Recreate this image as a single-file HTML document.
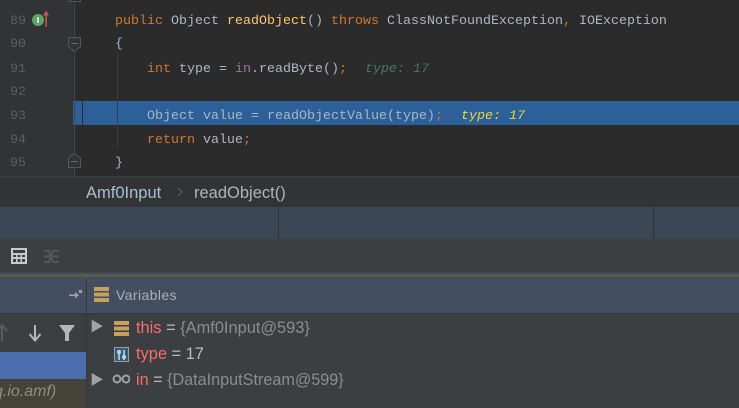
<!DOCTYPE html>
<html>
<head>
<meta charset="utf-8">
<style>
html,body{margin:0;padding:0;background:#2b2b2b;}
#r{position:relative;width:739px;height:408px;overflow:hidden;background:#2b2b2b;}
.a{position:absolute;}
.c{position:absolute;font:13.33px/18px "Liberation Mono",monospace;white-space:pre;color:#a9b7c6;}
.n{position:absolute;left:10px;width:20px;font:13.33px/18px "Liberation Mono",monospace;color:#5c5f62;white-space:pre;}
.k{color:#cc7832}.m{color:#ffc66d}.p{color:#9876aa}
.s{position:absolute;font:16.5px/20px "Liberation Sans",sans-serif;white-space:pre;color:#a9bfd4;}
.t{position:absolute;font:16.4px/20px "Liberation Sans",sans-serif;white-space:pre;color:#bbbbbb;}
.v{color:#ff6b68}.g{color:#8a8d8f}
</style>
</head>
<body>
<div id="r">
<!-- gutter -->
<div class="a" style="left:0;top:0;width:73px;height:177px;background:#313335"></div>
<div class="a" style="left:73px;top:101px;width:666px;height:24px;background:#2d5f99"></div>
<div class="a" style="left:82px;top:101px;width:1px;height:24px;background:#2b2b2b"></div>
<div class="a" style="left:117px;top:54px;width:1px;height:47px;background:#3d3d3d"></div>
<div class="a" style="left:117px;top:101px;width:1px;height:24px;background:#2b3f5c"></div>
<div class="a" style="left:117px;top:125px;width:1px;height:23px;background:#3d3d3d"></div>

<div class="n" style="top:13px">89</div>
<div class="n" style="top:36px">90</div>
<div class="n" style="top:61px">91</div>
<div class="n" style="top:84px">92</div>
<div class="n" style="top:108px">93</div>
<div class="n" style="top:132px">94</div>
<div class="n" style="top:155px">95</div>

<!-- gutter icons -->
<svg class="a" style="left:0;top:0" width="100" height="177">
<path d="M68.5 0V1.5H80.5V0" fill="none" stroke="#4f5153" />
<rect x="74" y="2" width="1" height="35" fill="#45474a"/>
<rect x="74" y="52" width="1" height="103" fill="#45474a"/>
<path d="M68.500 37.500H80.500V46.500L74.500 51.500L68.500 46.500Z" fill="#313335" stroke="#54565a"/>
<rect x="71" y="43" width="7" height="1" fill="#6a6c6e"/>
<path d="M68.500 167.500V158L74.500 153.500L80.500 158V167.500Z" fill="#313335" stroke="#54565a"/>
<rect x="71" y="161" width="7" height="1" fill="#6a6c6e"/>
<rect x="74" y="168" width="1" height="9" fill="#45474a"/>
<circle cx="38" cy="20" r="6" fill="#59a869"/>
<rect x="36.500" y="16" width="3" height="8" rx="1" fill="#6f7f70"/>
<rect x="37" y="17" width="2" height="6" fill="#cfe5d2"/>
<rect x="45.300" y="12" width="1.600" height="15" fill="#c75450"/>
<path d="M43 15.500L46 10.500L49 15.500Z" fill="#c75450"/>
</svg>

<!-- code -->
<div class="c" style="left:115px;top:13px"><span class="k">public</span> Object <span class="m">readObject</span>() <span class="k">throws</span> ClassNotFoundException<span class="k">,</span> IOException</div>
<div class="c" style="left:115px;top:36px">{</div>
<div class="c" style="left:147px;top:61px"><span class="k">int</span> type = <span class="p">in</span>.readByte()<span class="k">;</span></div>
<div class="c" style="left:365px;top:61px"><i style="color:#3e7a63">type: 17</i></div>
<div class="c" style="left:147px;top:108px">Object value = readObjectValue(type)<span class="k">;</span></div>
<div class="c" style="left:461px;top:108px"><i style="color:#e6d93a">type: 17</i></div>
<div class="c" style="left:147px;top:132px"><span class="k">return</span> value<span class="k">;</span></div>
<div class="c" style="left:115px;top:155px">}</div>

<!-- breadcrumbs -->
<div class="a" style="left:0;top:176px;width:739px;height:1px;background:#3a3c3e"></div>
<div class="a" style="left:0;top:177px;width:739px;height:30px;background:#323335"></div>
<div class="s" style="left:86px;top:183px">Amf0Input</div>
<svg class="a" style="left:176px;top:187px" width="8" height="10"><path d="M2 1L6 5L2 9" fill="none" stroke="#5f6265" stroke-width="1"/></svg>
<div class="s" style="left:194px;top:183px;color:#b0b4b8">readObject()</div>

<!-- tab strip -->
<div class="a" style="left:0;top:207px;width:739px;height:32px;background:#3b4754"></div>
<div class="a" style="left:278px;top:207px;width:1px;height:32px;background:#2f3338"></div>
<div class="a" style="left:653px;top:207px;width:1px;height:32px;background:#2f3338"></div>

<!-- toolbar -->
<div class="a" style="left:0;top:239px;width:739px;height:33px;background:#3c3f41"></div>
<svg class="a" style="left:0;top:239px" width="70" height="33">
<rect x="11" y="9" width="16" height="16" fill="#c8cacc"/>
<rect x="13" y="11" width="12" height="3" fill="#3c3f41"/>
<rect x="13" y="16" width="3" height="2" fill="#3c3f41"/><rect x="17.500" y="16" width="3" height="2" fill="#3c3f41"/><rect x="22" y="16" width="3" height="2" fill="#3c3f41"/>
<rect x="13" y="20" width="3" height="3" fill="#3c3f41"/><rect x="17.500" y="20" width="3" height="3" fill="#3c3f41"/><rect x="22" y="20" width="3" height="3" fill="#3c3f41"/>
<path d="M44 12H49L53 23H59M44 23H49L53 12H59M44 17.500H59" fill="none" stroke="#55585a" stroke-width="2"/>
</svg>

<!-- splitter -->
<div class="a" style="left:0;top:272px;width:739px;height:2px;background:#46494b"></div>
<div class="a" style="left:0;top:274px;width:739px;height:3px;background:#525c58"></div>
<div class="a" style="left:0;top:277px;width:739px;height:2px;background:#4b4c4e"></div>

<!-- header -->
<div class="a" style="left:0;top:279px;width:739px;height:34px;background:#434e60"></div>
<div class="a" style="left:0;top:313px;width:739px;height:1px;background:#383b3d"></div>
<svg class="a" style="left:66px;top:285px" width="20" height="20">
<rect x="3" y="9.500" width="9" height="1.500" fill="#a0a4a8"/>
<path d="M9 7L13 10.200L9 13.500Z" fill="#a0a4a8"/>
<rect x="13" y="5" width="3" height="3" fill="#a0a4a8"/>
</svg>
<svg class="a" style="left:94px;top:287px" width="16" height="15">
<rect x="0" y="0" width="15" height="4" fill="#c79f5f"/>
<rect x="0" y="5.500" width="15" height="4" fill="#c79f5f"/>
<rect x="0" y="11" width="15" height="4" fill="#c79f5f"/>
</svg>
<div class="t" style="left:116px;top:285px;font-size:14px;letter-spacing:.4px;color:#a9b0b8">Variables</div>

<!-- tree -->
<div class="a" style="left:87px;top:314px;width:652px;height:94px;background:#3c3f41"></div>
<svg class="a" style="left:88px;top:316px" width="42" height="80">
<path d="M4 5L16 12L4 19Z" transform="translate(0,-1) scale(.92)" fill="#a0a2a4"/>
<path d="M4 57L16 64L4 71Z" transform="translate(0,4.500) scale(.92)" fill="#a0a2a4"/>
<rect x="26" y="5" width="15" height="4" fill="#c79f5f"/>
<rect x="26" y="10.500" width="15" height="4" fill="#c79f5f"/>
<rect x="26" y="16" width="15" height="4" fill="#c79f5f"/>
<rect x="26.500" y="31.500" width="14" height="14" fill="#2f5f7f" stroke="#9a9c9e"/>
<path d="M31 34V44M36 34V44" stroke="#d8dade" stroke-width="1.500"/>
<circle cx="31" cy="36" r="1.500" fill="none" stroke="#d8dade"/>
<circle cx="36" cy="41" r="1.500" fill="none" stroke="#d8dade"/>
<circle cx="29" cy="63" r="3.500" fill="none" stroke="#a0a2a4" stroke-width="2"/>
<circle cx="38" cy="63" r="3.500" fill="none" stroke="#a0a2a4" stroke-width="2"/>
</svg>
<div class="t" style="left:136px;top:318px"><span class="v">this</span> = <span class="g">{Amf0Input@593}</span></div>
<div class="t" style="left:136px;top:344px"><span class="v">type</span> = 17</div>
<div class="t" style="left:136px;top:370px;font-size:16.2px"><span class="v">in</span> = <span class="g">{DataInputStream@599}</span></div>

<!-- frames panel -->
<div class="a" style="left:0;top:314px;width:86px;height:38px;background:#3c3f41"></div>
<svg class="a" style="left:0;top:314px" width="86" height="38">
<path d="M2 27V11M-3 17L2 11L7 17" fill="none" stroke="#595b5d" stroke-width="2"/>
<path d="M35 11V26M29.500 20L35 26.500L40.500 20" fill="none" stroke="#b4b6b8" stroke-width="2"/>
<path d="M59 11H75L69 19V27H65V19Z" fill="#b4b6b8"/>
</svg>
<div class="a" style="left:0;top:352px;width:86px;height:27px;background:#4b6eaf"></div>
<div class="a" style="left:0;top:379px;width:86px;height:29px;background:#45423a"></div>
<div class="a" style="left:-6px;top:382px;width:92px;font:italic 16px/20px 'Liberation Sans',sans-serif;color:#8f8d85;white-space:pre;">q.io.amf)</div>
<div class="a" style="left:86px;top:279px;width:1px;height:129px;background:#34373a"></div>
</div>
</body>
</html>
